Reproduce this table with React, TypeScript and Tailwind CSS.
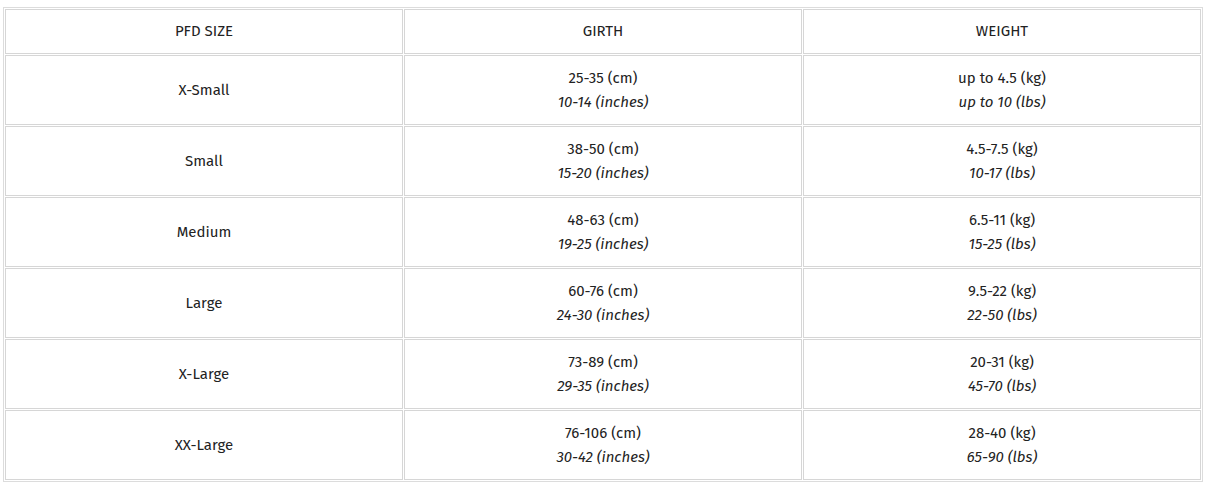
import 'react';

const rows = [
  { size: 'X-Small', cm: '25-35 (cm)', inch: '10-14 (inches)', kg: 'up to 4.5 (kg)', lbs: 'up to 10 (lbs)' },
  { size: 'Small', cm: '38-50 (cm)', inch: '15-20 (inches)', kg: '4.5-7.5 (kg)', lbs: '10-17 (lbs)' },
  { size: 'Medium', cm: '48-63 (cm)', inch: '19-25 (inches)', kg: '6.5-11 (kg)', lbs: '15-25 (lbs)' },
  { size: 'Large', cm: '60-76 (cm)', inch: '24-30 (inches)', kg: '9.5-22 (kg)', lbs: '22-50 (lbs)' },
  { size: 'X-Large', cm: '73-89 (cm)', inch: '29-35 (inches)', kg: '20-31 (kg)', lbs: '45-70 (lbs)' },
  { size: 'XX-Large', cm: '76-106 (cm)', inch: '30-42 (inches)', kg: '28-40 (kg)', lbs: '65-90 (lbs)' },
];

const cell = 'border border-[#d6d6d6] text-center align-middle p-0';

const App = () => {
  return (
    <div className="bg-white pl-[3px] pt-[7px] min-h-[487px] text-[15px] leading-[24px] text-[#222]" style={{ fontFamily: '"Fira Sans", "Noto Sans", sans-serif' }}>
      <table className="w-[1200px] table-fixed border-separate border-spacing-[1px] border border-[#dcdcdc]">
        <thead>
          <tr className="h-[45px]">
            <th className={`${cell} font-normal pb-[2px]`}>PFD SIZE</th>
            <th className={`${cell} font-normal pb-[2px]`}>GIRTH</th>
            <th className={`${cell} font-normal pb-[2px]`}>WEIGHT</th>
          </tr>
        </thead>
        <tbody>
          {rows.map((r) => (
            <tr key={r.size} className="h-[70px]">
              <td className={cell}>{r.size}</td>
              <td className={`${cell} pb-px`}>
                {r.cm}
                <br />
                <em>{r.inch}</em>
              </td>
              <td className={`${cell} pb-px`}>
                {r.kg}
                <br />
                <em>{r.lbs}</em>
              </td>
            </tr>
          ))}
        </tbody>
      </table>
    </div>
  );
};

export default App;
